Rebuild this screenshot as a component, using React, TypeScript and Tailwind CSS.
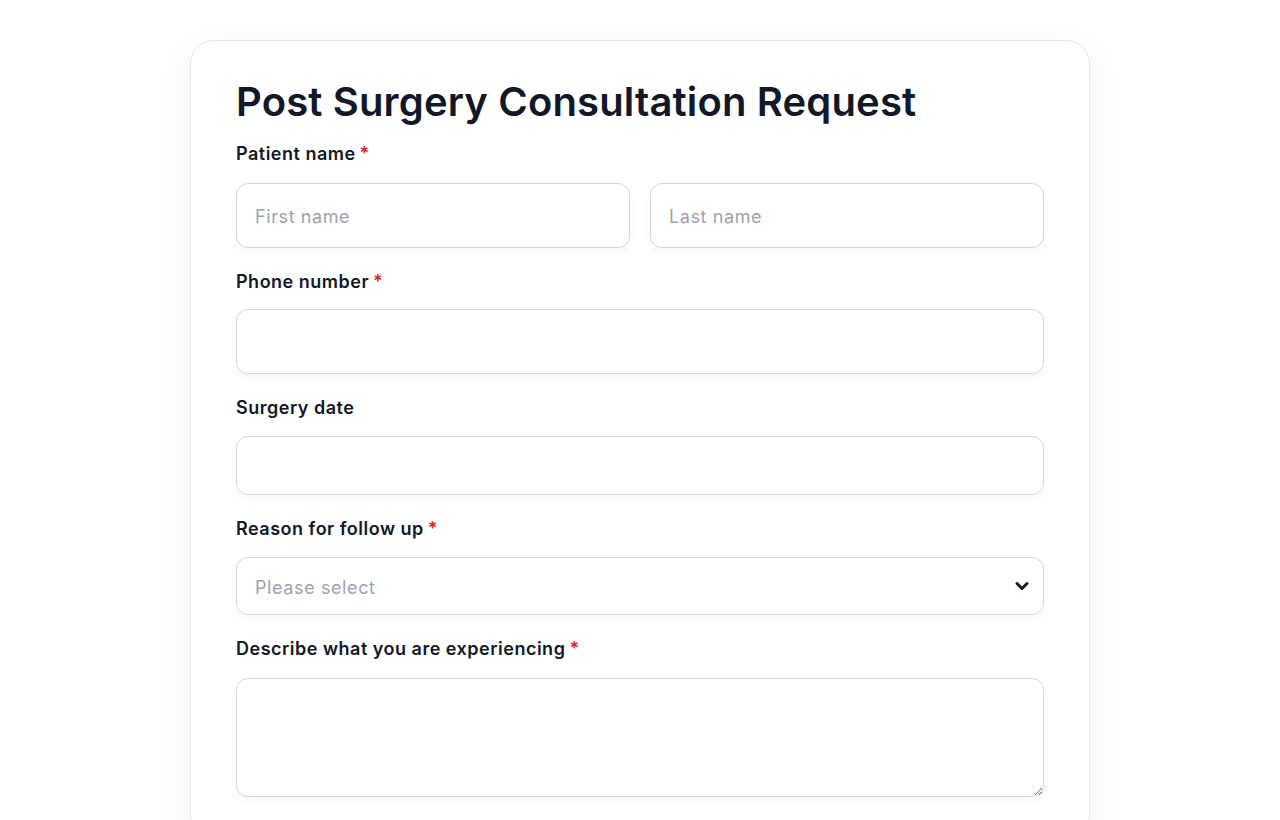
import { ChevronDown } from "lucide-react";

const font = { fontFamily: "Inter, 'Noto Sans', sans-serif" };

function Label({ text, required }: { text: string; required?: boolean }) {
  return (
    <label className="block h-7 text-[18px] leading-7 font-semibold text-[#111827] tracking-[0.5px]">
      {text}
      {required && <span className="text-[#dc2626] ml-1">*</span>}
    </label>
  );
}

const inputCls =
  "w-full rounded-[12px] border border-[#d4d6db] bg-white px-[18px] text-[18px] tracking-[0.6px] placeholder:text-[#9ca3af] shadow-[0_4px_10px_rgba(0,0,0,0.04)] outline-none";

export default function App() {
  return (
    <div className="min-h-screen bg-white flex justify-center pt-10" style={font}>
      <div className="w-[900px] rounded-[24px] border border-[#e5e7eb] bg-white px-[45px] pt-[36px] pb-10 shadow-[0_10px_40px_rgba(0,0,0,0.06)]">
        <h1 className="text-[40px] leading-[50px] font-semibold text-[#111827] tracking-[0.15px]">
          Post Surgery Consultation Request
        </h1>

        {/* Patient name */}
        <div className="mt-[13px]">
          <Label text="Patient name" required />
          <div className="mt-[15px] grid grid-cols-2 gap-5">
            <input className={`${inputCls} h-[65px] pt-px text-[#111827]`} placeholder="First name" />
            <input className={`${inputCls} h-[65px] pt-px text-[#111827]`} placeholder="Last name" />
          </div>
        </div>

        {/* Phone */}
        <div className="mt-[20px]">
          <Label text="Phone number" required />
          <input className={`${inputCls} h-[65px] mt-[13px] text-[#111827]`} />
        </div>

        {/* Surgery date */}
        <div className="mt-[20px]">
          <Label text="Surgery date" />
          <input type="text" className={`${inputCls} h-[59px] mt-[14px] text-[#111827]`} />
        </div>

        {/* Reason */}
        <div className="mt-[20px]">
          <Label text="Reason for follow up" required />
          <div className="relative mt-[14px]">
            <select
              defaultValue=""
              className={`${inputCls} h-[58px] pt-[3px] appearance-none text-[#9ca3af]`}
            >
              <option value="" disabled>
                Please select
              </option>
              <option>Pain</option>
              <option>Swelling</option>
              <option>Other</option>
            </select>
            <ChevronDown
              className="absolute right-[12px] top-1/2 -translate-y-1/2 w-[20px] h-[20px] text-[#111827] pointer-events-none"
              strokeWidth={3.5}
            />
          </div>
        </div>

        {/* Describe */}
        <div className="mt-[20px]">
          <Label text="Describe what you are experiencing" required />
          <textarea className={`${inputCls} h-[119px] mt-[15px] py-3 block text-[#111827]`} />
        </div>
      </div>
    </div>
  );
}
